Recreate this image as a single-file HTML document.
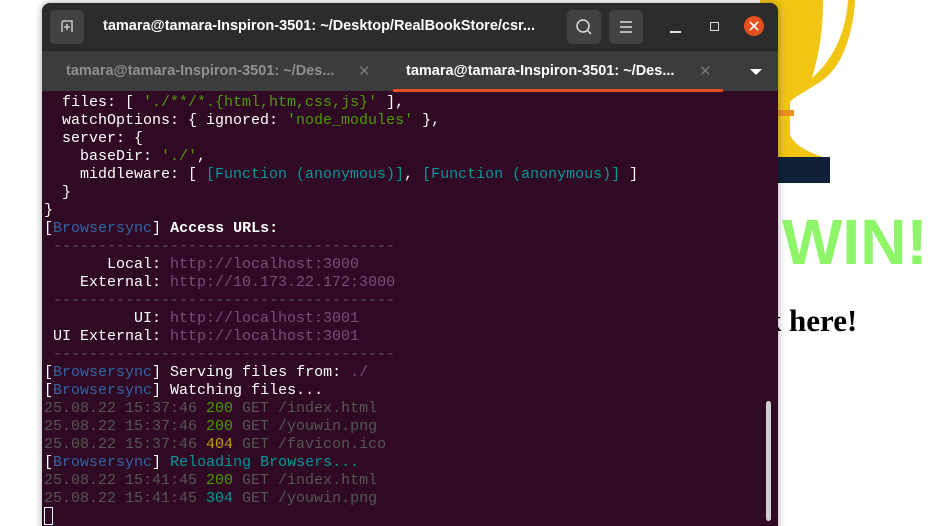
<!DOCTYPE html>
<html><head><meta charset="utf-8">
<style>
*{margin:0;padding:0;box-sizing:border-box}
html,body{width:937px;height:526px;overflow:hidden;background:#fff;position:relative;font-family:"Liberation Sans",sans-serif}
.win{position:absolute;left:42px;top:3px;width:736px;height:530px;background:#300a24;border-radius:8px 8px 0 0;overflow:hidden;box-shadow:0 0 8px rgba(0,0,0,.35)}
.title{position:absolute;left:0;top:0;width:736px;height:47px;background:#2c2c2c}
.btn{position:absolute;top:7px;width:34px;height:34px;background:#424242;border-radius:5px}
.ttext{position:absolute;left:61px;top:15px;color:#fff;font-weight:bold;font-size:14.5px;white-space:nowrap}
.tabs{position:absolute;left:0;top:47px;width:736px;height:41px;background:#3c3c3c;border-top:1px solid #1f1f1f}
.tab{position:absolute;top:12px;font-size:14.5px;font-weight:bold;white-space:nowrap}
.term{position:absolute;left:2px;top:91px;font-family:"Liberation Mono",monospace;font-size:15px;line-height:18px;color:#fff;white-space:pre}
.g{color:#4e9a06}.b{color:#3465a4}.c{color:#06989a}.u{color:#75507b}.d{color:#555753}.y{color:#c4a000}.w{font-weight:bold}
</style></head><body>
<svg style="position:absolute;left:700px;top:0" width="237" height="200">
<rect x="60" y="0" width="30" height="157" fill="#f0c513"/>
<path d="M60 0 L155 0 C153 35 142 68 120 82 C105 92 95 96 88 104 L60 104 Z" fill="#f0c513"/>
<path d="M88 130 C92 145 108 152 123 157 L88 157 Z" fill="#f0c513"/>
<path d="M123 0 L148 0 C146 30 135 58 112 78 C119 55 123 30 123 0 Z" fill="#fff"/>
<rect x="60" y="110" width="34" height="6" fill="#e8901a"/>
<rect x="60" y="157" width="70" height="26" fill="#0f2038"/>
</svg>
<div style="position:absolute;left:782px;top:205px;font-size:64px;font-weight:bold;color:#8ef56a;font-family:'Liberation Sans',sans-serif">WIN!</div>
<div style="position:absolute;left:764px;top:303px;font-size:31px;font-weight:bold;color:#000;font-family:'Liberation Serif',serif">k here!</div>
<div class="win">
 <div class="title">
  <div class="btn" style="left:8px"><svg width="34" height="34"><path d="M12 22 V13 Q12 11 14 11 H22 V22" fill="none" stroke="#ddd" stroke-width="1.3"/><path d="M14 17H20M17 14V20" stroke="#ddd" stroke-width="1.3"/></svg></div>
  <div class="ttext">tamara@tamara-Inspiron-3501: ~/Desktop/RealBookStore/csr...</div>
  <div class="btn" style="left:525px"><svg width="34" height="34"><circle cx="16" cy="16" r="6" fill="none" stroke="#ddd" stroke-width="1.5"/><path d="M20.5 20.5L24 24" stroke="#ddd" stroke-width="1.5"/></svg></div>
  <div class="btn" style="left:567px"><svg width="34" height="34"><path d="M11 12H23M11 17H23M11 22H23" stroke="#ddd" stroke-width="1.4"/></svg></div>
  <div style="position:absolute;left:628px;top:28px;width:11px;height:1.5px;background:#ddd"></div>
  <div style="position:absolute;left:668px;top:19px;width:9px;height:9px;border:1.5px solid #ddd"></div>
  <div style="position:absolute;left:702px;top:13px;width:20px;height:20px;border-radius:50%;background:#e4501e"><svg width="20" height="20"><path d="M6 6L14 14M14 6L6 14" stroke="#fff" stroke-width="1.6"/></svg></div>
 </div>
 <div class="tabs">
  <div class="tab" style="left:24px;color:#8f8f8f">tamara@tamara-Inspiron-3501: ~/Des...</div>
  <div style="position:absolute;left:316px;top:11px;color:#777;font-size:15px">✕</div>
  <div class="tab" style="left:364px;color:#fff">tamara@tamara-Inspiron-3501: ~/Des...</div>
  <div style="position:absolute;left:657px;top:11px;color:#777;font-size:15px">✕</div>
  <div style="position:absolute;left:708px;top:18px;width:0;height:0;border-left:6px solid transparent;border-right:6px solid transparent;border-top:6px solid #fff"></div>
  <div style="position:absolute;left:351px;top:38px;width:330px;height:3px;background:#e4501e"></div>
 </div>
 <div class="term">  files: [ <span class="g">'./**/*.{html,htm,css,js}'</span> ],
  watchOptions: { ignored: <span class="g">'node_modules'</span> },
  server: {
    baseDir: <span class="g">'./'</span>,
    middleware: [ <span class="c">[Function (anonymous)]</span>, <span class="c">[Function (anonymous)]</span> ]
  }
}
[<span class="b">Browsersync</span>] <span class="w">Access URLs:</span>
<span class="d"> --------------------------------------</span>
       Local: <span class="u">http://localhost:3000</span>
    External: <span class="u">http://10.173.22.172:3000</span>
<span class="d"> --------------------------------------</span>
          UI: <span class="u">http://localhost:3001</span>
 UI External: <span class="u">http://localhost:3001</span>
<span class="d"> --------------------------------------</span>
[<span class="b">Browsersync</span>] Serving files from: <span class="u">./</span>
[<span class="b">Browsersync</span>] Watching files...
<span class="d">25.08.22 15:37:46 </span><span class="g">200</span><span class="d"> GET /index.html</span>
<span class="d">25.08.22 15:37:46 </span><span class="g">200</span><span class="d"> GET /youwin.png</span>
<span class="d">25.08.22 15:37:46 </span><span class="y">404</span><span class="d"> GET /favicon.ico</span>
[<span class="b">Browsersync</span>] <span class="c">Reloading Browsers...</span>
<span class="d">25.08.22 15:41:45 </span><span class="g">200</span><span class="d"> GET /index.html</span>
<span class="d">25.08.22 15:41:45 </span><span class="c">304</span><span class="d"> GET /youwin.png</span>
</div>
 <div style="position:absolute;left:2px;top:504px;width:9px;height:18px;border:1.5px solid #fff"></div>
 <div style="position:absolute;left:724px;top:398px;width:5px;height:120px;background:#cfcfcf;border-radius:3px"></div>
</div>
</body></html>
